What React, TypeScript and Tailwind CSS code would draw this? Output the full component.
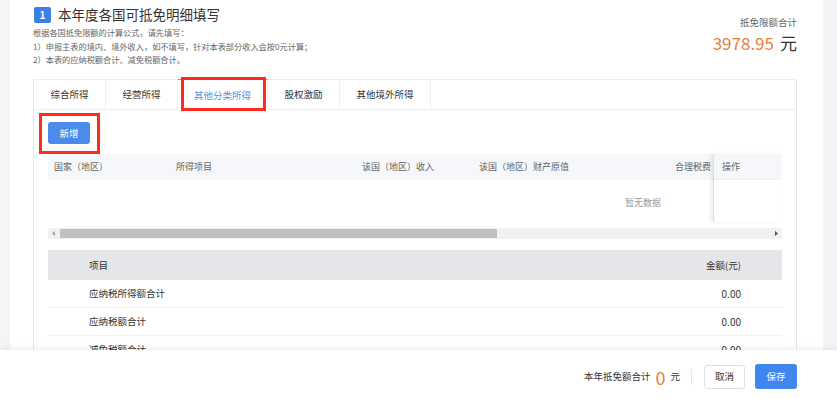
export default function App() {
  const tabs = [
    { label: "综合所得", w: "w-[72px]" },
    { label: "经营所得", w: "w-[72px]" },
    { label: "其他分类所得", w: "w-[90px]", active: true },
    { label: "股权激励", w: "w-[72px]" },
    { label: "其他境外所得", w: "w-[91px]" },
  ];
  const rows = ["应纳税所得额合计", "应纳税额合计", "减免税额合计"];
  return (
    <div className="relative w-[837px] h-[399px] overflow-hidden bg-white flex font-['Noto_Sans_CJK_SC','Noto_Sans',sans-serif] text-[#333]">
      <div className="w-[10px] shrink-0 bg-[#f4f5f7]" />
      <div className="w-[813px] shrink-0 pl-[23px] pr-[26px] flex flex-col">
        {/* header */}
        <div className="flex justify-between h-[79px] shrink-0">
          <div className="pt-[7px]">
            <div className="flex items-center h-[16px] gap-[7px] pl-[1px]">
              <span className="w-[17px] h-[16px] bg-[#3c7ee2] rounded-[2px] text-white text-[10px] font-bold flex items-center justify-center leading-none">
                1
              </span>
              <span className="text-[13.5px] leading-none text-[#333]">本年度各国可抵免明细填写</span>
            </div>
            <div className="mt-[3px] text-[8.2px] leading-[13.5px] text-[#666]">
              <p>根据各国抵免限额的计算公式，请先填写：</p>
              <p>1）申报主表的境内、境外收入，如不填写，针对本表部分收入会按0元计算；</p>
              <p>2）本表的应纳税额合计、减免税额合计。</p>
            </div>
          </div>
          <div className="pt-[15px] flex flex-col items-end">
            <span className="text-[9.5px] leading-[14px] text-[#666]">抵免限额合计</span>
            <span className="leading-[20px] mt-[4px] flex items-baseline">
              <span className="text-[17px] text-[#e5803f]">3978.95</span>
              <span className="text-[17px] text-[#333] ml-[6px]">元</span>
            </span>
          </div>
        </div>

        {/* tabs card */}
        <div className="flex-1 border-x border-[#e4e7ed] flex flex-col">
          <div className="flex h-[31px] shrink-0">
            {tabs.map((t) => (
              <div
                key={t.label}
                className={
                  t.active
                    ? `relative ${t.w} border-t border-t-[#8a9bb8] border-r border-r-[#eceef2] flex items-center justify-center text-[9.5px] text-[#5b8fdc] bg-white`
                    : `relative ${t.w} border-t border-b border-r border-[#eceef2] flex items-center justify-center text-[9.5px] text-[#333]`
                }
              >
                {t.label}
                {t.active && (
                  <div className="absolute left-[3px] right-[1px] top-[-3px] bottom-[-1px] border-[3px] border-[#ff2b1c]" />
                )}
              </div>
            ))}
            <div className="flex-1 border-t border-b border-[#eceef2]" />
          </div>

          <div className="px-[14px] pt-[12px] flex flex-col">
            <div className="relative w-[42px] h-[22px]">
              <button className="w-[42px] h-[22px] rounded-[3px] bg-[#4b8bea] text-white text-[9.5px] flex items-center justify-center">
                新增
              </button>
              <div className="absolute left-[-9px] right-[-10px] top-[-9px] bottom-[-10px] border-[3px] border-[#ff2b1c]" />
            </div>

            {/* table 1 */}
            <div className="mt-[10px] w-full">
              <div className="flex h-[26px] bg-[#f5f7fa] text-[9px] text-[#666] items-center">
                <div className="flex-1 flex items-center">
                  <span className="w-[122px] pl-[6px]">国家（地区）</span>
                  <span className="w-[186px] pl-[6px]">所得项目</span>
                  <span className="w-[117px] pl-[6px]">该国（地区）收入</span>
                  <span className="flex-1 pl-[6px]">该国（地区）财产原值</span>
                  <span className="pr-[2px]">合理税费</span>
                </div>
                <div className="w-[69px] h-full border-l border-[#dcdfe4] shadow-[-2px_0_3px_rgba(0,0,0,0.08)] pl-[8px] flex items-center bg-[#f5f7fa]">
                  操作
                </div>
              </div>
              <div className="flex h-[45px]">
                <div className="flex-1 flex items-center">
                  <span className="ml-[577px] text-[9px] text-[#999]">暂无数据</span>
                </div>
                <div className="w-[69px] h-[42px] border-l border-[#dcdfe4] shadow-[-2px_0_3px_rgba(0,0,0,0.08)] bg-white" />
              </div>
              <div className="mt-[3px] h-[11px] bg-[#f1f1f1] flex items-center">
                <div className="w-[12px] h-full flex items-center justify-center">
                  <svg width="4" height="5" viewBox="0 0 4 5">
                    <path d="M3 0 L0 2.5 L3 5 Z" fill="#a3a3a3" />
                  </svg>
                </div>
                <div className="w-[437px] h-[9px] bg-[#c1c1c1]" />
                <div className="flex-1" />
                <div className="w-[12px] h-full flex items-center justify-center">
                  <svg width="4" height="5" viewBox="0 0 4 5">
                    <path d="M1 0 L4 2.5 L1 5 Z" fill="#505050" />
                  </svg>
                </div>
              </div>
            </div>

            {/* table 2 */}
            <div className="mt-[11px] w-full">
              <div className="flex h-[30px] bg-[#e4e6e9] items-center justify-between text-[9.5px] text-[#333] pl-[41px] pr-[41px]">
                <span>项目</span>
                <span>金额(元)</span>
              </div>
              {rows.map((r) => (
                <div
                  key={r}
                  className="flex h-[28px] items-center justify-between border-b border-[#eef0f3] pl-[41px] pr-[41px] text-[9.5px] text-[#333]"
                >
                  <span>{r}</span>
                  <span className="text-[10px]">0.00</span>
                </div>
              ))}
            </div>
          </div>
        </div>
      </div>
      <div className="flex-1 bg-[#f3f4f8]" />

      {/* footer */}
      <div className="absolute left-0 right-0 bottom-0 h-[49px] bg-white shadow-[0_-2px_6px_rgba(0,0,0,0.07)] flex items-center justify-end pr-[40px] pt-[4px]">
        <span className="text-[9.5px] text-[#333]">本年抵免额合计</span>
        <span className="ml-[5px] text-[18px] leading-none text-[#e5803f]">0</span>
        <span className="ml-[5px] text-[9.5px] text-[#333]">元</span>
        <span className="ml-[11px] w-px h-[16px] bg-[#e6e6e6]" />
        <button className="ml-[12px] w-[41px] h-[24px] border border-[#dcdfe6] rounded-[3px] bg-white text-[9.5px] text-[#333] flex items-center justify-center">
          取消
        </button>
        <button className="ml-[10px] w-[42px] h-[25px] rounded-[3px] bg-[#3f86ef] text-[9.5px] text-white flex items-center justify-center">
          保存
        </button>
      </div>
    </div>
  );
}
